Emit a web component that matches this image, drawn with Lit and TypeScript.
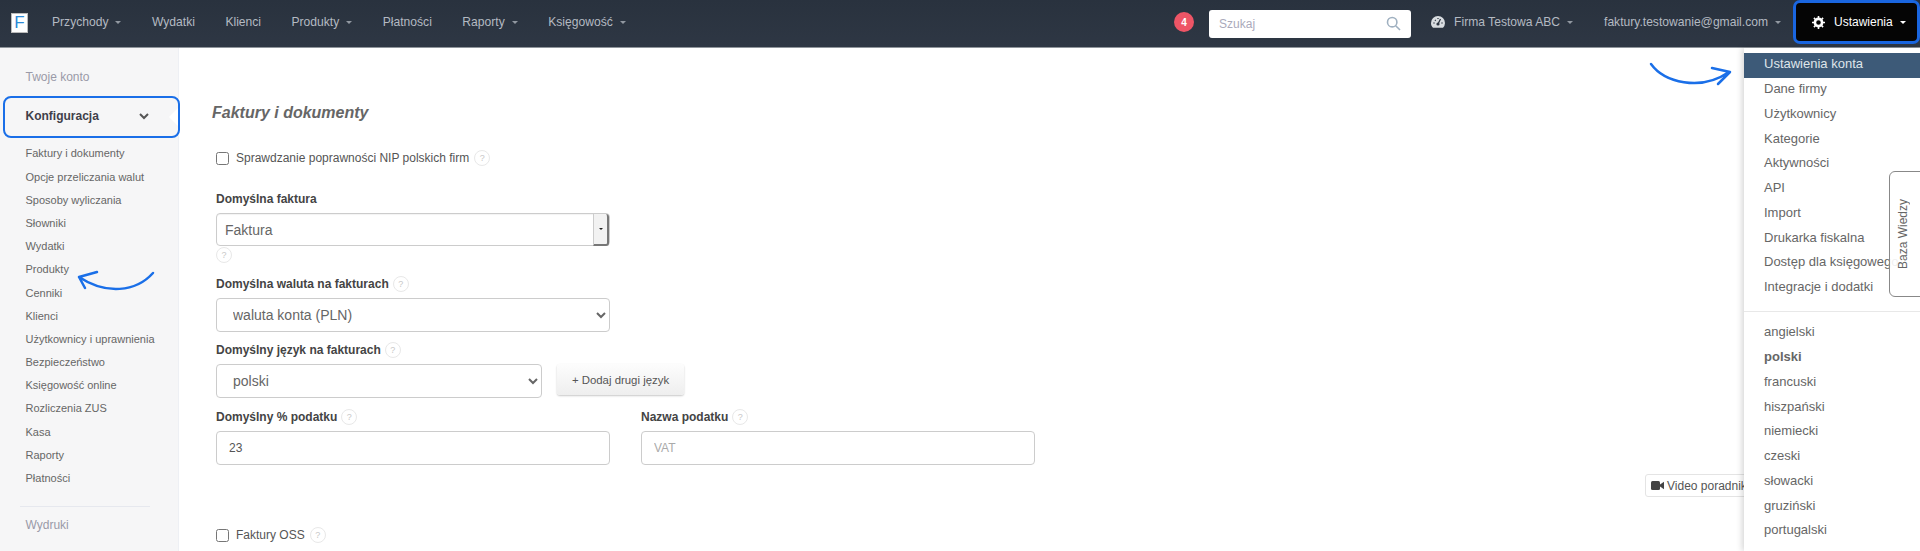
import { LitElement, html, css, svg } from "lit";
import { customElement } from "lit/decorators.js";

const caret = html`<i class="caret"></i>`;
const help = html`<span class="help">?</span>`;

const sideItems = ["Faktury i dokumenty","Opcje przeliczania walut","Sposoby wyliczania","Słowniki","Wydatki","Produkty","Cenniki","Klienci","Użytkownicy i uprawnienia","Bezpieczeństwo","Księgowość online","Rozliczenia ZUS","Kasa","Raporty","Płatności"];
const menuItems = ["Dane firmy","Użytkownicy","Kategorie","Aktywności","API","Import","Drukarka fiskalna","Dostęp dla księgowego","Integracje i dodatki"];
const langs = ["angielski","polski","francuski","hiszpański","niemiecki","czeski","słowacki","gruziński","portugalski"];
const navItems: [string, boolean][] = [["Przychody",true],["Wydatki",false],["Klienci",false],["Produkty",true],["Płatności",false],["Raporty",true],["Księgowość",true]];

@customElement("app-root")
export class AppRoot extends LitElement {
  static styles = css`
    :host { display:block; position:relative; width:1920px; height:551px; overflow:hidden; background:#fff; font-family:"Liberation Sans",Arial,sans-serif; font-size:12px; color:#555; }
    * { box-sizing:border-box; }
    .top { height:48px; display:flex; align-items:center; background:linear-gradient(#29323e,#2e3744); border-bottom:1px solid #8f959b; color:#b4bac2; font-size:12.1px; padding:0 0 3px 11px; }
    .logo { width:17px; height:20px; background:#fff; border:1px solid #bbb; color:#2d8ad6; font-size:17px; line-height:18px; text-align:center; margin:1px 24px 0 0; }
    .nav { display:flex; gap:30.5px; }
    .nav span, .acct { display:flex; align-items:center; gap:7px; white-space:nowrap; }
    .caret { display:inline-block; width:0; height:0; border:3.5px solid transparent; border-top-color:currentColor; border-bottom:0; opacity:.75; }
    .right { margin-left:auto; display:flex; align-items:center; }
    .badge { width:20px; height:20px; border-radius:50%; background:#ee5566; color:#fff; font-size:10px; font-weight:bold; display:flex; align-items:center; justify-content:center; margin-right:15px; }
    .search { width:202px; height:28px; background:#fff; border-radius:3px; display:flex; align-items:center; justify-content:space-between; padding:0 10px; color:#aab; margin:3px 20px 0 0; font-size:12px; }
    .gauge { margin-right:9px; display:block; }
    .acct.firma { margin-right:31px; }
    .acct.mail { margin-right:12px; }
    .ust { width:127px; height:44px; background:#050505; border:3px solid #1a66e0; border-radius:7px; color:#fff; font-size:12px; display:flex; align-items:center; padding-left:16px; gap:7px; }
    .ust .gear { margin-right:2px; }
    .ust .caret { opacity:1; }
    .body { display:flex; height:503px; }
    .side { width:179px; flex:none; background:#f6f6f7; border-right:1px solid #eef0f4; font-size:11px; color:#666; }
    .sec { color:#9a9aa8; font-size:12px; padding-left:25.5px; }
    .sec.a { height:48px; line-height:58px; }
    .conf { position:relative; height:42px; margin:0 0 4.4px 3px; width:177px; border:2.5px solid #1a6fe8; border-radius:8px; font-size:12px; font-weight:bold; color:#3f3f4a; display:flex; align-items:center; justify-content:space-between; padding:0 29px 2px 20.5px; }
    .notch { position:absolute; right:0; top:10px; width:0; height:0; border:9px solid transparent; border-left:0; border-right-color:#fff; }
    .side ul { list-style:none; margin:0; padding:0 0 0 25.5px; }
    .side li { height:23.2px; line-height:23.2px; white-space:nowrap; }
    .rule { height:1px; background:#e6e8ee; margin:16px 28px 0 20px; }
    .sec.b { margin-top:11px; }
    .main { flex:1; padding:0 0 0 37px; position:relative; }
    h1 { font-size:16px; font-style:italic; font-weight:bold; color:#666; margin:56px 0 0 -4px; line-height:18px; }
    .check { display:flex; align-items:center; gap:7px; height:16px; }
    .check input { width:13px; height:13px; margin:0; }
    .nip { margin-top:28px; }
    .help { width:16px; height:16px; flex:none; display:inline-flex; align-items:center; justify-content:center; border:1.5px solid #e8e8e8; border-radius:50%; color:#c8c8c8; font-size:9px; font-weight:normal; background:#fff; }
    .check .help { margin-left:-2px; }
    label { display:flex; align-items:center; gap:4px; font-weight:bold; color:#444; height:16px; }
    .l1 { margin-top:25px; margin-bottom:6px; }
    .combo { width:394px; height:33px; border:1px solid #ccc; border-radius:4px; display:flex; align-items:center; justify-content:space-between; padding-left:8px; font-size:14px; color:#666; box-shadow:inset 0 1px 1px rgba(0,0,0,.05); }
    .combo b { width:16px; height:32px; background:#f2f2f2; border-left:1px solid #ccc; border-right:2px solid #777; border-bottom:2px solid #777; border-radius:0 3px 3px 0; display:flex; align-items:center; justify-content:center; font-weight:normal; }
    .combo .caret { color:#222; opacity:1; border-width:2px; border-bottom:0; }
    .undr { display:flex; height:16px; margin-top:1px; }
    .l2 { margin:13px 0 6px; }
    select { display:block; height:34px; border:1px solid #ccc; border-radius:4px; background:#fff; font:14px "Liberation Sans",Arial,sans-serif; color:#666; padding-left:12px; }
    .w { width:394px; }
    .l3 { margin:10px 0 6px; }
    .row { display:flex; align-items:flex-start; }
    .lg { width:326px; }
    .add { margin-left:15px; width:127px; height:31px; border:0; border-radius:3px; background:linear-gradient(#fdfdfd,#eeeeee); box-shadow:0 1px 2px rgba(0,0,0,.22); display:flex; align-items:center; justify-content:center; font:11.4px "Liberation Sans",Arial,sans-serif; color:#555; }
    .two { display:flex; gap:31px; margin-top:11px; }
    .two > div { width:394px; }
    .two label { margin-bottom:6px; }
    input.tx { display:block; width:394px; height:34px; border:1px solid #ccc; border-radius:4px; font:12px "Liberation Sans",Arial,sans-serif; color:#555; padding:0 12px; }
    input.tx::placeholder { color:#aaa; }
    .video { position:absolute; left:1466px; top:426px; width:120px; height:23px; border:1px solid #e4e4e4; border-radius:3px; background:#fff; display:flex; align-items:center; gap:3px; padding-left:5px; color:#555; white-space:nowrap; }
    .oss { margin-top:62px; }
    .menu { position:absolute; left:1744px; top:48px; width:176px; height:503px; background:#fff; padding-top:5px; box-shadow:-2px 0 6px rgba(0,0,0,.16); font-size:13px; color:#666; }
    .menu div { height:24.75px; line-height:22.5px; padding-left:20px; white-space:nowrap; }
    .menu .act { background:#3d5a78; color:#dfe5ea; height:25px; }
    .menu hr { border:0; height:1px; background:#e8e8e8; margin:10px 0 9.5px; }
    .menu .bold { font-weight:bold; }
    .tab { position:absolute; left:1889px; top:171px; width:40px; height:126px; background:rgba(255,255,255,.9); border:1px solid #888; border-radius:6px; display:flex; align-items:center; justify-content:flex-start; }
    .tab span { writing-mode:vertical-rl; transform:rotate(180deg); margin-left:6px; font-size:12px; color:#666; white-space:nowrap; }
    .arrow { position:absolute; left:0; top:0; pointer-events:none; }
  `;

  render() {
    return html`
      <div class="top">
        <div class="logo">F</div>
        <div class="nav">${navItems.map(([t, c]) => html`<span>${t}${c ? caret : ""}</span>`)}</div>
        <div class="right">
          <div class="badge">4</div>
          <div class="search"><span>Szukaj</span>
            <svg width="15" height="15" viewBox="0 0 15 15" fill="none" stroke="#9fb0c0" stroke-width="1.6"><circle cx="6.2" cy="6.2" r="4.7"/><path d="M9.7 9.7 14 14"/></svg>
          </div>
          <svg class="gauge" width="14" height="12" viewBox="0 0 14 12"><path fill="#d8dce0" d="M7 0a7 7 0 0 0-7 7c0 1.9.7 3.6 2 4.8h10A7 7 0 0 0 14 7a7 7 0 0 0-7-7z"/><path stroke="#2d3642" stroke-width="1.3" d="M7 8 9.5 3M2.5 7h1M10.5 7h1M7 2v1M4 4l.7.7"/><circle cx="7" cy="8" r="1.6" fill="#2d3642"/></svg>
          <div class="acct firma">Firma Testowa ABC ${caret}</div>
          <div class="acct mail">faktury.testowanie@gmail.com ${caret}</div>
          <div class="ust">
            <svg class="gear" width="13" height="13" viewBox="0 0 13 13"><circle cx="6.5" cy="6.5" r="3.6" fill="none" stroke="#fff" stroke-width="2.6"/><path stroke="#fff" stroke-width="1.6" d="M6.5 0v2.4M6.5 10.6V13M0 6.5h2.4M10.6 6.5H13M1.9 1.9l1.6 1.6M9.5 9.5l1.6 1.6M1.9 11.1l1.6-1.6M9.5 3.5l1.6-1.6"/></svg>
            Ustawienia ${caret}
          </div>
        </div>
      </div>
      <div class="body">
        <aside class="side">
          <div class="sec a">Twoje konto</div>
          <div class="conf">Konfiguracja
            <svg width="10" height="7" viewBox="0 0 10 7" fill="none" stroke="#555" stroke-width="2"><path d="M1 1l4 4 4-4"/></svg>
            <i class="notch"></i>
          </div>
          <ul>${sideItems.map(s => html`<li>${s}</li>`)}</ul>
          <div class="rule"></div>
          <div class="sec b">Wydruki</div>
        </aside>
        <main class="main">
          <h1>Faktury i dokumenty</h1>
          <div class="check nip"><input type="checkbox"/><span>Sprawdzanie poprawności NIP polskich firm</span>${help}</div>
          <label class="l1">Domyślna faktura</label>
          <div class="combo">Faktura<b>${caret}</b></div>
          <div class="undr">${help}</div>
          <label class="l2">Domyślna waluta na fakturach ${help}</label>
          <select class="w"><option>waluta konta (PLN)</option></select>
          <label class="l3">Domyślny język na fakturach ${help}</label>
          <div class="row">
            <select class="lg"><option>polski</option></select>
            <button class="add">+ Dodaj drugi język</button>
          </div>
          <div class="two">
            <div><label>Domyślny % podatku ${help}</label><input class="tx" value="23"/></div>
            <div><label>Nazwa podatku ${help}</label><input class="tx" placeholder="VAT"/></div>
          </div>
          <div class="check oss"><input type="checkbox"/><span>Faktury OSS</span>${help}</div>
          <div class="video">
            <svg width="13" height="9" viewBox="0 0 13 9"><rect width="9" height="9" rx="1.5" fill="#444"/><path d="M9 3.5 13 .8v7.4L9 5.5z" fill="#444"/></svg>
            Video poradnik
          </div>
        </main>
      </div>
      <nav class="menu">
        <div class="act">Ustawienia konta</div>
        ${menuItems.map(m => html`<div>${m}</div>`)}
        <hr/>
        ${langs.map(l => html`<div class=${l === "polski" ? "bold" : ""}>${l}</div>`)}
      </nav>
      <div class="tab"><span>Baza Wiedzy</span></div>
      <svg class="arrow" width="1920" height="551" fill="none" stroke="#1a6fe8" stroke-width="2.5" stroke-linecap="round" stroke-linejoin="round">
        ${svg`<path d="M1651 64C1664 82 1700 92 1729 72M1712 68l18 4-12 12"/>`}
        ${svg`<path d="M153 273C136 292 106 295 79 277M97 272l-18 5 6 11"/>`}
      </svg>
    `;
  }
}
